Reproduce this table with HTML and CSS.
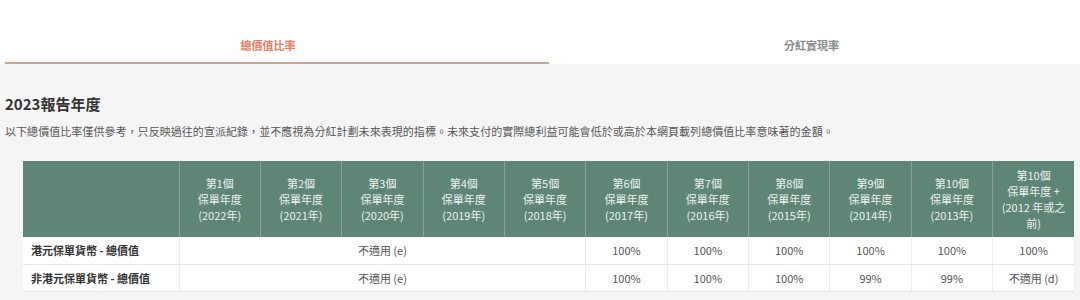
FILE: index.html
```html
<!DOCTYPE html>
<html lang="zh-Hant">
<head>
<meta charset="utf-8">
<link rel="stylesheet" href="styles.css">
</head>
<body>
<div class="tabs">
  <div class="tab active">總價值比率</div>
  <div class="tab">分紅實現率</div>
</div>
<main class="content">
  <h2 class="title">2023報告年度</h2>
  <p class="note">以下總價值比率僅供參考，只反映過往的宣派紀錄，並不應視為分紅計劃未來表現的指標。未來支付的實際總利益可能會低於或高於本網頁載列總價值比率意味著的金額。</p>
  <table class="ratio">
    <thead>
      <tr>
        <th class="first"></th>
        <th>第1個<br>保單年度<br>(2022年)</th>
        <th>第2個<br>保單年度<br>(2021年)</th>
        <th>第3個<br>保單年度<br>(2020年)</th>
        <th>第4個<br>保單年度<br>(2019年)</th>
        <th>第5個<br>保單年度<br>(2018年)</th>
        <th>第6個<br>保單年度<br>(2017年)</th>
        <th>第7個<br>保單年度<br>(2016年)</th>
        <th>第8個<br>保單年度<br>(2015年)</th>
        <th>第9個<br>保單年度<br>(2014年)</th>
        <th>第10個<br>保單年度<br>(2013年)</th>
        <th>第10個<br>保單年度 +<br>(2012 年或之<br>前)</th>
      </tr>
    </thead>
    <tbody>
      <tr>
        <td class="label">港元保單貨幣 - 總價值</td>
        <td colspan="5">不適用 (e)</td>
        <td>100%</td>
        <td>100%</td>
        <td>100%</td>
        <td>100%</td>
        <td>100%</td>
        <td>100%</td>
      </tr>
      <tr>
        <td class="label">非港元保單貨幣 - 總價值</td>
        <td colspan="5">不適用 (e)</td>
        <td>100%</td>
        <td>100%</td>
        <td>100%</td>
        <td>99%</td>
        <td>99%</td>
        <td>不適用 (d)</td>
      </tr>
    </tbody>
  </table>
</main>
</body>
</html>
```
FILE: styles.css
```css
* { box-sizing: border-box; }
html, body { margin: 0; padding: 0; }
body {
  background: #f5f5f5;
  font-family: "Noto Sans CJK TC", "Noto Sans", sans-serif;
  color: #333;
  width: 1080px;
  height: 300px;
  overflow: hidden;
}
.tabs {
  display: flex;
  background: #ffffff;
  height: 64px;
}
.tab {
  flex: 1;
  text-align: center;
  font-size: 11px;
  font-weight: 700;
  line-height: 16px;
  padding-top: 37px;
  color: #8a8a8a;
  padding-right: 6px;
}
.tab.active {
  flex: 0 0 544px;
  margin-left: 5px;
  padding-right: 18px;
  color: #e27d63;
  border-bottom: 2px solid #caa696;
}
.content {
  padding: 30px 5px 0 5px;
}
.title {
  margin: 0;
  font-size: 15px;
  line-height: 20px;
  font-weight: 700;
  color: #333;
}
.note {
  margin: 8px 0 0 0;
  font-size: 11px;
  line-height: 18px;
  letter-spacing: 0.05px;
  color: #555;
}
.ratio {
  margin: 21px 0 0 18px;
  width: 1051px;
  border-collapse: collapse;
  table-layout: fixed;
  background: #ffffff;
}
.ratio th {
  background: #5d8677;
  color: #eef3f1;
  font-weight: 400;
  font-size: 11px;
  line-height: 16px;
  height: 76px;
  padding: 0 2px;
  text-align: center;
  vertical-align: middle;
  border-left: 1px solid #86a699;
}
.ratio th.first {
  width: 156px;
  border-left: none;
}
.ratio td {
  height: 27px;
  font-size: 11px;
  color: #555;
  text-align: center;
  border-bottom: 1px solid #e6e6e6;
  border-left: 1px solid #ececec;
  padding: 0;
}
.ratio td.label {
  text-align: left;
  padding-left: 8px;
  font-weight: 700;
  color: #333;
  border-left: none;
}
```
